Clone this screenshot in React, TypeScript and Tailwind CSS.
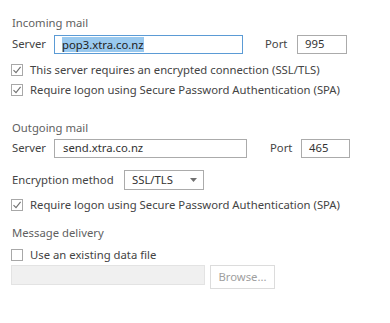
import React from "react";

const font = { fontFamily: '"Noto Sans", "Segoe UI", Arial, sans-serif' };

function Check({ checked, label }: { checked: boolean; label: string }) {
  return (
    <div className="flex h-4 items-center">
      <div className="ml-[11px] flex h-[12px] w-[12px] items-center justify-center border border-[#a8a8a8] bg-white">
        {checked && (
          <svg width="10" height="10" viewBox="0 0 10 10" fill="none">
            <path d="M1.5 5.2 L4 7.6 L8.6 1.8" stroke="#707070" strokeWidth="1.1" />
          </svg>
        )}
      </div>
      <span className="ml-[7px] text-[11.3px] text-[#444]">{label}</span>
    </div>
  );
}

function Header({ children }: { children: React.ReactNode }) {
  return <div className="flex h-4 items-center pl-3 text-[11.3px] text-[#5f5f5f]">{children}</div>;
}

export default function App() {
  return (
    <div className="h-[323px] w-[390px] bg-white pt-[15px]" style={font}>
      <Header>Incoming mail</Header>

      <div className="mt-[4px] flex h-[19px] items-center">
        <span className="ml-3 w-[42px] text-[11.3px] text-[#444]">Server</span>
        <div className="flex h-[19px] w-[189px] items-center border border-[#5b9bd5] px-[7px]">
          <span className="bg-[#99c9ef] text-[11.3px] leading-[15px] text-[#222]">pop3.xtra.co.nz</span>
        </div>
        <span className="ml-[22px] w-[32px] text-[11.3px] text-[#444]">Port</span>
        <div className="flex h-[19px] w-[50px] items-center border border-[#ababab] px-[7px] text-[11.3px] text-[#333]">995</div>
      </div>

      <div className="mt-[8px]">
        <Check checked label="This server requires an encrypted connection (SSL/TLS)" />
      </div>
      <div className="mt-[4px]">
        <Check checked label="Require logon using Secure Password Authentication (SPA)" />
      </div>

      <div className="mt-[22px]">
        <Header>Outgoing mail</Header>
      </div>

      <div className="mt-[3px] flex h-[19px] items-center">
        <span className="ml-3 w-[42px] text-[11.3px] text-[#444]">Server</span>
        <div className="flex h-[19px] w-[193px] items-center border border-[#ababab] px-[8px] text-[11.3px] text-[#333]">
          send.xtra.co.nz
        </div>
        <span className="ml-[23px] w-[31px] text-[11.3px] text-[#444]">Port</span>
        <div className="flex h-[19px] w-[49px] items-center border border-[#ababab] px-[7px] text-[11.3px] text-[#333]">465</div>
      </div>

      <div className="mt-[12px] flex h-[20px] items-center">
        <span className="ml-3 w-[112px] text-[11.3px] text-[#444]">Encryption method</span>
        <div className="flex h-[20px] w-[80px] items-center justify-between border border-[#ababab] pl-[7px] pr-[6px]">
          <span className="text-[11.3px] text-[#333]">SSL/TLS</span>
          <svg width="7" height="4" viewBox="0 0 7 4">
            <path d="M0 0 H7 L3.5 4 Z" fill="#707070" />
          </svg>
        </div>
      </div>

      <div className="mt-[7px]">
        <Check checked label="Require logon using Secure Password Authentication (SPA)" />
      </div>

      <div className="mt-[12px]">
        <Header>Message delivery</Header>
      </div>

      <div className="mt-[6px]">
        <Check checked={false} label="Use an existing data file" />
      </div>

      <div className="mt-[2px] flex items-start">
        <div className="ml-[11px] h-[20px] w-[194px] border border-[#e3e3e3] bg-[#f0f0f0]" />
        <div className="ml-[5px] flex h-[24px] w-[65px] items-center justify-center border border-[#dcdcdc] bg-white text-[11.3px] text-[#a0a0a0]">
          Browse...
        </div>
      </div>
    </div>
  );
}
